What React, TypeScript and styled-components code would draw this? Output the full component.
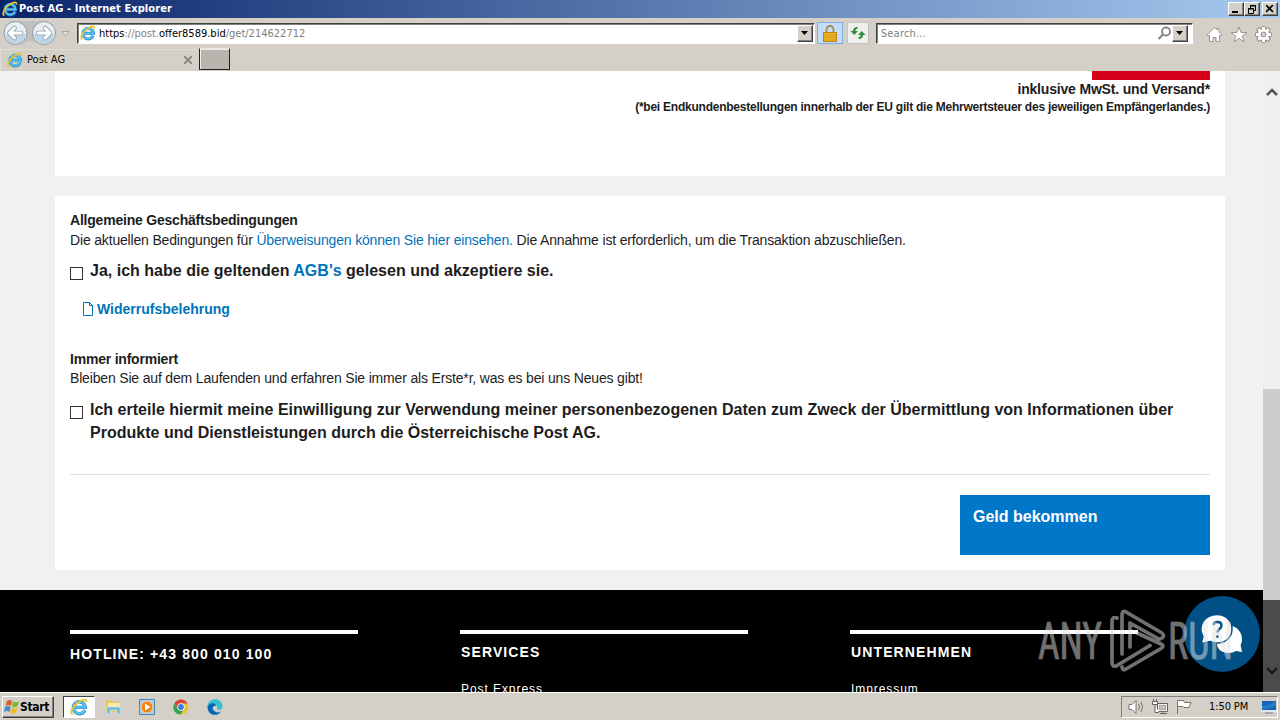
import * as React from "react";
import styled, { createGlobalStyle, css } from "styled-components";

const colors = {
  CHROME: "#d4d0c8",
  CHROME_DARK: "#404040",
  CHROME_SHADOW: "#808080",
  PAGE: "#f1f1f1",
  TEXT: "#1d1d1d",
  LINK: "#0073b9",
  BUTTON: "#0077c8",
  RED: "#d4001a",
};

const fonts = {
  UI: `"DejaVu Sans Condensed", "DejaVu Sans", sans-serif`,
  BODY: `"Liberation Sans", Arial, sans-serif`,
};

const GlobalStyle = createGlobalStyle`
  * {
    box-sizing: border-box;
  }
  body {
    margin: 0;
    overflow: hidden;
  }
`;

const raised = css`
  border: 1px solid;
  border-color: #fff ${colors.CHROME_DARK} ${colors.CHROME_DARK} #fff;
  box-shadow: inset -1px -1px 0 ${colors.CHROME_SHADOW};
`;

const Desktop = styled.div`
  position: relative;
  display: flex;
  flex-direction: column;
  width: 1280px;
  height: 720px;
  overflow: hidden;
  background: ${colors.CHROME};
  font: 11px/14px ${fonts.UI};
  font-stretch: condensed;
  color: #000;
  white-space: nowrap;

  svg {
    display: block;
    flex: none;
  }
`;

const TitleBar = styled.div`
  display: flex;
  align-items: center;
  flex: none;
  height: 18px;
  padding: 0 2px;
  background: linear-gradient(to right, #0a246a, #a6caf0);
`;

const TitleText = styled.span`
  flex: 1;
  margin-left: 1px;
  color: #fff;
  font-weight: 700;
  letter-spacing: 0.08px;
`;

const WindowButton = styled.div<{ $gap?: number }>`
  ${raised}
  display: flex;
  align-items: center;
  justify-content: center;
  width: 16px;
  height: 14px;
  margin-left: ${p => p.$gap || 0}px;
  background: ${colors.CHROME};
`;

const NavBar = styled.div`
  display: flex;
  align-items: center;
  flex: none;
  height: 30px;
  padding: 0 8px 0 2px;
`;

const AddressField = styled.div`
  display: flex;
  align-items: center;
  width: 740px;
  height: 21px;
  margin: 0 2px 0 5px;
  padding: 1px 1px 1px 2px;
  background: #fff;
  border: 1px solid;
  border-color: ${colors.CHROME_DARK} #fff #fff ${colors.CHROME_DARK};
  box-shadow: inset 1px 1px 0 ${colors.CHROME_SHADOW};
`;

const Address = styled.span`
  flex: 1;
  margin-left: 3px;
  padding-top: 2px;
  color: #808080;

  b {
    color: #000;
    font-weight: 400;
  }
`;

const DropButton = styled.div`
  ${raised}
  display: flex;
  align-items: center;
  justify-content: center;
  width: 16px;
  height: 17px;
  background: ${colors.CHROME};
`;

const ToolButton = styled.div<{ $active?: boolean }>`
  display: flex;
  align-items: center;
  justify-content: center;
  width: ${p => (p.$active ? 26 : 22)}px;
  height: 22px;
  margin-right: ${p => (p.$active ? 4 : 7)}px;
  border: 1px solid ${p => (p.$active ? "#7eaee0" : "#c3c3bd")};
  border-radius: ${p => (p.$active ? 0 : 2)}px;
  background: ${p => (p.$active ? "#c5dcf8" : "#eeeeea")};
`;

const SearchField = styled(AddressField)`
  width: 318px;
  margin: 0 13px 0 0;
  padding-right: 4px;
`;

const SearchText = styled(Address)`
  margin-left: 2px;
  letter-spacing: 0.2px;
`;

const NavIcons = styled.div`
  display: flex;
  gap: 7px;
  padding-top: 3px;
`;

const TabBar = styled.div`
  display: flex;
  flex: none;
  height: 23px;
`;

const Tab = styled.div`
  display: flex;
  align-items: center;
  width: 198px;
  height: 22px;
  margin-top: 1px;
  padding: 0 6px 1px 6px;
  border-left: 1px solid #e0ddd6;
  border-top: 1px solid #e0ddd6;

  span {
    flex: 1;
    margin-left: 4px;
  }
`;

const NewTab = styled.div`
  width: 31px;
  height: 22px;
  margin-left: 1px;
  background: #bab4ae;
  border: 1px solid #222;
  border-top-color: #e8e6e1;
  box-shadow: inset 1px 1px 0 #eee;
`;

const Viewport = styled.div`
  display: flex;
  height: 621px;
  overflow: hidden;
`;

const Page = styled.main`
  width: 1263px;
  height: 621px;
  overflow: hidden;
  background: ${colors.PAGE};
  color: ${colors.TEXT};
  font: 14px/20px ${fonts.BODY};
`;

const PriceCard = styled.section`
  display: flex;
  flex-direction: column;
  align-items: flex-end;
  width: 1170px;
  height: 105px;
  margin: 0 0 20px 55px;
  padding-right: 15px;
  background: #fff;
  font-weight: 700;
`;

const PriceBlock = styled.div`
  width: 118px;
  height: 9px;
  background: ${colors.RED};
`;

const TaxLine = styled.div`
  line-height: 19px;
  letter-spacing: -0.18px;
`;

const TaxNote = styled.div`
  font-size: 12px;
  line-height: 16px;
  letter-spacing: -0.237px;
`;

const TermsCard = styled.section`
  width: 1170px;
  height: 374px;
  margin: 0 0 20px 55px;
  padding: 14px 15px 0;
  background: #fff;
`;

const Heading = styled.h4`
  margin: 0;
  font-size: 14px;
  line-height: 20px;
  letter-spacing: -0.21px;
`;

const Copy = styled.p<{ $tight?: boolean }>`
  margin: 0;
  line-height: ${p => (p.$tight ? 18 : 20)}px;
  padding-bottom: ${p => (p.$tight ? 2 : 0)}px;
  letter-spacing: -0.17px;
`;

const Link = styled.a`
  color: ${colors.LINK};
`;

const CheckRow = styled.label`
  display: flex;
  margin-top: 9px;
  font-size: 16px;
  font-weight: 700;
  line-height: 23px;
  letter-spacing: 0.01px;
`;

const Checkbox = styled.span`
  flex: none;
  width: 13px;
  height: 13px;
  margin: 8px 7px 0 0;
  background: #fff;
  border: 1px solid #333;
`;

const Revocation = styled.a`
  display: flex;
  align-items: center;
  gap: 3px;
  height: 20px;
  margin: 17px 0 30px 12px;
  color: ${colors.LINK};
  font-weight: 700;
`;

const Actions = styled.div`
  display: flex;
  justify-content: flex-end;
  margin-top: 30px;
  padding-top: 20px;
  border-top: 1px solid #dedede;
`;

const SubmitButton = styled.button`
  width: 250px;
  height: 60px;
  padding: 11px 13px;
  border: 0;
  background: ${colors.BUTTON};
  color: #fff;
  font: 700 16px/21px ${fonts.BODY};
  text-align: left;
  display: flex;
`;

const Footer = styled.footer`
  display: flex;
  gap: 102px;
  height: 102px;
  padding: 40px 0 0 70px;
  background: #000;
  color: #fff;
`;

const FooterColumn = styled.div<{ $links?: boolean }>`
  flex: none;
  width: 288px;
  padding: ${p => (p.$links ? "8px 0 0 1px" : "10px 0 0")};
  border-top: 4px solid #fff;
`;

const FooterTitle = styled.div`
  font-weight: 700;
  letter-spacing: 1.12px;
`;

const FooterLink = styled.div`
  margin-top: 17px;
  font-size: 12px;
  letter-spacing: 0.93px;
`;

const Scrollbar = styled.div`
  display: flex;
  flex-direction: column;
  width: 17px;
  background: #f0f0f0;
`;

const ScrollArrow = styled.div`
  display: flex;
  align-items: center;
  justify-content: center;
  height: 42px;
`;

const ScrollThumb = styled.div`
  height: 211px;
  margin-top: 276px;
  background: #cdcdcd;
`;

const ScrollEnd = styled.div`
  flex: 1;
  display: flex;
  align-items: flex-end;
  justify-content: center;
  padding-bottom: 17px;
  background: #4b4b4b;
`;

const ChatButton = styled.div`
  position: absolute;
  left: 1184px;
  top: 596px;
`;

const Watermark = styled.div`
  position: absolute;
  left: 1038px;
  top: 608px;
  opacity: 0.5;
`;

const TaskBar = styled.div`
  display: flex;
  align-items: center;
  flex: none;
  height: 28px;
  padding: 1px 2px 0;
  border-top: 1px solid #fff;
  background: ${colors.CHROME};
`;

const StartButton = styled.div`
  ${raised}
  display: flex;
  align-items: center;
  width: 52px;
  height: 22px;
  padding-left: 1px;
  font-size: 12px;
  font-weight: 700;
  letter-spacing: -0.3px;
`;

const ActiveTask = styled.div`
  display: flex;
  align-items: center;
  justify-content: center;
  width: 32px;
  height: 22px;
  margin-left: 9px;
  background: #fff;
  border: 1px solid;
  border-color: ${colors.CHROME_DARK} #fff #fff ${colors.CHROME_DARK};
`;

const QuickLaunch = styled.div`
  display: flex;
  flex: 1;
  gap: 18px;
  margin-left: 10px;
`;

const Tray = styled.div`
  display: flex;
  align-items: center;
  width: 157px;
  height: 22px;
  padding-left: 6px;
  border: 1px solid;
  border-color: ${colors.CHROME_SHADOW} #fff #fff ${colors.CHROME_SHADOW};
`;

const TrayIcons = styled.div`
  display: flex;
  gap: 7px;
`;

const Clock = styled.span`
  flex: 1;
  margin-left: 16px;
  letter-spacing: -0.1px;
`;

const IeIcon = ({ size = 16 }: { size?: number }) => (
  <svg width={size} height={size} viewBox="0 0 16 16" fill="none">
    <path d="M13.2 10.7A5.3 5.3 0 1 1 13.6 8.3H4.5" stroke="#2588c6" strokeWidth="3" />
    <path d="M13 10.6A5.2 5.2 0 1 1 13.5 8.4H4.5" stroke="#55c2f2" strokeWidth="2" />
    <path d="M2.4 14.6C-1 13 3 6.5 8 3.4c3.8-2.5 7-2.8 6.5.2" stroke="#edc22b" strokeWidth="1.7" />
  </svg>
);

const ArrowButtons = () => (
  <svg width="70" height="28" viewBox="0 0 70 28" fill="none">
    <path d="M13 2h29c14 0 14 24 0 24-7 0-8-4-14-4s-7 4-15 4C-1 26-1 2 13 2z" fill="#c3c1be" />
    {[13.5, 42].map(x => (
      <g key={x}>
        <circle cx={x} cy="14" r="11.5" fill="#eaeff3" stroke="#8a98a6" />
        <path d={`M${x - 10} 15a10 10 0 0 0 20 0q-10-5-20 0z`} fill="#c0d6e6" />
      </g>
    ))}
    <g strokeLinejoin="round" strokeLinecap="round">
      <path d="M19 14H8m4.500-5L7.500 14l5 5" stroke="#8fa4b5" strokeWidth="4.600" />
      <path d="M19 14H8m4.500-5L7.500 14l5 5" stroke="#fff" strokeWidth="3" />
      <path d="M36 14h11.500m-4.500-5 5 5-5 5" stroke="#8fa4b5" strokeWidth="4.600" />
      <path d="M36 14h11.500m-4.500-5 5 5-5 5" stroke="#fff" strokeWidth="3" />
    </g>
    <path d="M60 12.500h7l-3.500 4.500z" fill="#e8e6e2" stroke="#aaa69f" />
  </svg>
);

const DownTriangle = () => (
  <svg width="8" height="4" viewBox="0 0 8 4">
    <path d="M0 0h7L3.500 4z" />
  </svg>
);

const LockIcon = () => (
  <svg width="14" height="17" viewBox="0 0 14 17" fill="none">
    <path d="M3.500 8V4.500a3.500 3.500 0 0 1 7 0V8" stroke="#a58c48" strokeWidth="1.800" />
    <rect x=".5" y="7.500" width="13" height="9" fill="#eeb322" stroke="#ba8420" />
    <path d="M1 10h12M1 12.500h12M1 15h12" stroke="#d99a1c" />
  </svg>
);

const RefreshIcon = () => (
  <svg width="16" height="14" viewBox="0 0 16 14" fill="#2d9138">
    <path d="M7.500 1C4.500 1 3 2.500 3 5H.5L4.300 9 8 5H5.500C5.500 3.500 6 3 7.500 3z" />
    <path d="M8.500 13c3 0 4.500-1.500 4.500-4h2.500l-3.800-4L8 9h2.500c0 1.500-.5 2-2 2z" />
  </svg>
);

const SearchIcon = () => (
  <svg width="15" height="15" viewBox="0 0 15 15" fill="none" stroke="#858585">
    <circle cx="9" cy="5.500" r="4" strokeWidth="1.800" />
    <path d="M6 8.500 1.500 13" strokeWidth="2.300" />
  </svg>
);

const HomeIcon = () => (
  <svg width="17" height="17" viewBox="0 0 17 17" fill="#fff" stroke="#9b9893">
    <path d="M8.500 1.500 1 9l1.500 1L3.500 9v6.500h3.500v-4h3v4h3.500V9l1 1L16 9l-3-3V2.500h-2V4z" />
  </svg>
);

const StarIcon = () => (
  <svg width="18" height="17" viewBox="0 0 18 17" fill="#fff" stroke="#9b9893">
    <path d="m9 1 2 5.500h6l-4.800 3.600 1.800 5.700L9 12.400l-5 3.400 1.800-5.700L1 6.500h6z" />
  </svg>
);

const GearIcon = () => (
  <svg width="17" height="17" viewBox="0 0 17 17" fill="none">
    {[0, 45, 90, 135].map(angle => (
      <rect key={angle} x="6.500" y=".5" width="4" height="16" rx="1" fill="#fff" stroke="#8b8883" transform={`rotate(${angle} 8.500 8.500)`} />
    ))}
    <circle cx="8.500" cy="8.500" r="5.500" fill="#fff" />
    <circle cx="8.500" cy="8.500" r="2.500" fill="#d4d0c8" stroke="#8b8883" />
  </svg>
);

const FileIcon = () => (
  <svg width="12" height="14" viewBox="0 0 12 14" fill="none" stroke={colors.LINK}>
    <path d="M1.500.500h6l3 3v10h-9zM7.500.500v3h3" />
  </svg>
);

const ScrollChevron = ({ down }: { down?: boolean }) => (
  <svg width="12" height="8" viewBox="0 0 12 8" fill="none" stroke={down ? "#1c1c1c" : "#555"} strokeWidth="2.500">
    <path d={down ? "M1 1l5 5 5-5" : "M1 7l5-5 5 5"} />
  </svg>
);

const ChatIcon = () => (
  <svg width="76" height="76" viewBox="0 0 76 76">
    <circle cx="38" cy="38" r="38" fill="#005086" />
    <path d="M45 57c-7 0-12-4-12-9l14-18c7 1 11 7 11 13 0 4-2 6-1 8l1 5-6-1q-3 2-7 2z" fill="#fff" />
    <path d="M33 18.500c9 0 15 6.500 15 14.500s-6 14-15 14c-3 0-5-.5-7-1.500l-9 2 2-7c-6-11 2-22 14-22z" fill="#fff" stroke="#005086" strokeWidth="1.500" />
    <path d="M29.500 29c.5-4 8-4 8 .5 0 3.500-4 3.500-4 7" fill="none" stroke="#005086" strokeWidth="2.400" />
    <circle cx="33.500" cy="40.500" r="1.500" fill="#005086" />
  </svg>
);

const AnyRunLogo = () => (
  <svg width="206" height="66" viewBox="0 0 206 66" fill="none">
    <g fill="#e2e2e2" stroke="#e2e2e2" strokeWidth=".7" fontFamily="Roboto" fontSize="52" fontWeight="400">
      <text x="0" y="51" textLength="64" lengthAdjust="spacingAndGlyphs">ANY</text>
      <text x="130" y="51" textLength="65" lengthAdjust="spacingAndGlyphs">RUN</text>
    </g>
    <path
      d="M79 10q-5-2-5 4v40q0 6 5 3.500l33-20M84 46V7q0-5 4-3l36 21q3 3 0 5t-5 0L92 15v24M99 25l24 11q4 2 0 4.500L88 61q-3 2-4-2"
      stroke="#e2e2e2"
      strokeWidth="3.700"
      strokeLinejoin="round"
      strokeLinecap="round"
    />
  </svg>
);

const WindowsFlag = () => (
  <svg width="16" height="16" viewBox="0 0 16 16">
    <path d="M3 2q3-2 5 0L7 7Q5 5 1.500 7z" fill="#e35b28" />
    <path d="M9 2.500q3 1.500 6 0L13.500 7Q10.500 9 8 7.500z" fill="#7db633" />
    <path d="M1 8q3-2 5.500 0L5.500 13Q3 11 0 13z" fill="#3e8ed2" />
    <path d="M7.500 8.500q3 2 6 0L12 13.500q-3 2-6 0z" fill="#efbd28" />
  </svg>
);

const FolderIcon = () => (
  <svg width="16" height="16" viewBox="0 0 16 16">
    <path d="M1 3V1h6l1 2h6v10H1z" fill="#e6c967" />
    <path d="M3 4h12v5H3z" fill="#f9eaa9" />
    <path d="M2 8h13v7h-3v-4H5v4H2z" fill="#69b7dc" stroke="#d7edf6" strokeWidth=".6" />
  </svg>
);

const PlayerIcon = () => (
  <svg width="16" height="16" viewBox="0 0 16 16">
    <path d="M.5.500h15v15H.5z" fill="#a9cceb" stroke="#4288bd" />
    <circle cx="8" cy="8" r="6" fill="#ef8518" stroke="#ffd39a" />
    <path d="m6 4.500 5.500 3.500L6 11.500z" fill="#fff" />
  </svg>
);

const ChromeIcon = () => (
  <svg width="16" height="16" viewBox="0 0 16 16">
    <circle cx="8" cy="8" r="7.500" fill="#eac137" />
    <path d="M1.500 4.300A7.500 7.500 0 0 1 14.600 4.500H8L4.800 9.500z" fill="#dc4338" />
    <path d="M1.500 4.300 5 10l3 1.500h2L7.500 15.500C1 15-1.500 8.500 1.500 4.300z" fill="#34a350" />
    <circle cx="8" cy="8" r="3.700" fill="#fff" />
    <circle cx="8" cy="8" r="2.900" fill="#337cdb" />
  </svg>
);

const EdgeIcon = () => (
  <svg width="16" height="16" viewBox="0 0 16 16">
    <path d="M.5 7C1-2 15-2 15.500 7c.3 4-4 4.500-6 3 3-5-5-7-9-3z" fill="#36bfd1" />
    <path d="M.5 7c4-4 8-3 9 0-3-1-5 2-3 4 2 3 6 3 8 1C10 19 0 16 .5 7z" fill="#0867b5" />
  </svg>
);

const SpeakerIcon = () => (
  <svg width="17" height="16" viewBox="0 0 17 16" fill="none" stroke="#77736e">
    <path d="M1 5.500h3l4-4v13l-4-4H1z" fill="#fff" />
    <path d="M10.500 5q2 3 0 6M13 3q3 5 0 10" />
  </svg>
);

const NetworkIcon = () => (
  <svg width="17" height="16" viewBox="0 0 17 16" fill="none" stroke="#66635e">
    <path d="M5.500 4.500h10v8h-10zM8 14.500h7M11 13v2" fill="#eee" />
    <path d="M7.500 6.500h6v4h-6z" fill="#c5c2bc" stroke="#aaa69f" />
    <path d="M.5 2.500v3h5v-3zM1.500 0v2M4.500 0v2M3 6v7.500h4" fill="#fff" />
  </svg>
);

const FlagIcon = () => (
  <svg width="17" height="16" viewBox="0 0 17 16" fill="#fff" stroke="#77736e">
    <path d="M1.500 15V1.500h6l1 2h6.500l-2 5H8l-1-1H2" />
  </svg>
);

const MonitorIcon = () => (
  <svg width="16" height="14" viewBox="0 0 16 14">
    <path d="M1 1h14v9H1z" fill="#1764b4" />
    <path d="M1 6q7 0 14-5v4q-7 4-14 4z" fill="#287fca" />
    <path d="M0 10h16v2H0z" fill="#d8e8f5" />
    <path d="M4 13h8" stroke="#68809a" />
  </svg>
);

const BrowserChrome = () => (
  <>
    <TitleBar>
      <IeIcon />
      <TitleText>Post AG - Internet Explorer</TitleText>
      <WindowButton>
        <svg width="8" height="8"><path d="M0 6h6v2H0z" /></svg>
      </WindowButton>
      <WindowButton>
        <svg width="9" height="9" fill="none" stroke="#000">
          <path d="M2.500 3V.5h5v5H5.500M2 1h6M.5 3.500h5v5h-5zM0 4h6" />
        </svg>
      </WindowButton>
      <WindowButton $gap={2}>
        <svg width="8" height="8" stroke="#000" strokeWidth="1.700"><path d="m0 0 7 7M7 0 0 7" /></svg>
      </WindowButton>
    </TitleBar>
    <NavBar>
      <ArrowButtons />
      <AddressField>
        <IeIcon />
        <Address><b>https</b>://post.<b>offer8589.bid</b>/get/214622712</Address>
        <DropButton><DownTriangle /></DropButton>
      </AddressField>
      <ToolButton $active><LockIcon /></ToolButton>
      <ToolButton><RefreshIcon /></ToolButton>
      <SearchField>
        <SearchText>Search...</SearchText>
        <SearchIcon />
        <DropButton><DownTriangle /></DropButton>
      </SearchField>
      <NavIcons>
        <HomeIcon />
        <StarIcon />
        <GearIcon />
      </NavIcons>
    </NavBar>
    <TabBar>
      <Tab>
        <IeIcon />
        <span>Post AG</span>
        <svg width="8" height="8" stroke="#85817b" strokeWidth="1.800"><path d="m0 0 8 8M8 0 0 8" /></svg>
      </Tab>
      <NewTab />
    </TabBar>
  </>
);

const PageContent = () => (
  <Page>
    <PriceCard>
      <PriceBlock />
      <TaxLine>inklusive MwSt. und Versand*</TaxLine>
      <TaxNote>(*bei Endkundenbestellungen innerhalb der EU gilt die Mehrwertsteuer des jeweiligen Empfängerlandes.)</TaxNote>
    </PriceCard>
    <TermsCard>
      <Heading>Allgemeine Geschäftsbedingungen</Heading>
      <Copy>
        Die aktuellen Bedingungen für <Link>Überweisungen können Sie hier einsehen.</Link> Die Annahme ist erforderlich, um die Transaktion abzuschließen.
      </Copy>
      <CheckRow>
        <Checkbox />
        <span>Ja, ich habe die geltenden <Link>AGB's</Link> gelesen und akzeptiere sie.</span>
      </CheckRow>
      <Revocation>
        <FileIcon />
        Widerrufsbelehrung
      </Revocation>
      <Heading>Immer informiert</Heading>
      <Copy $tight>Bleiben Sie auf dem Laufenden und erfahren Sie immer als Erste*r, was es bei uns Neues gibt!</Copy>
      <CheckRow>
        <Checkbox />
        <span>
          Ich erteile hiermit meine Einwilligung zur Verwendung meiner personenbezogenen Daten zum Zweck der Übermittlung von Informationen über
          <br />
          Produkte und Dienstleistungen durch die Österreichische Post AG.
        </span>
      </CheckRow>
      <Actions>
        <SubmitButton>Geld bekommen</SubmitButton>
      </Actions>
    </TermsCard>
    <Footer>
      <FooterColumn>
        <FooterTitle>HOTLINE: +43 800 010 100</FooterTitle>
      </FooterColumn>
      <FooterColumn $links>
        <FooterTitle>SERVICES</FooterTitle>
        <FooterLink>Post Express</FooterLink>
      </FooterColumn>
      <FooterColumn $links>
        <FooterTitle>UNTERNEHMEN</FooterTitle>
        <FooterLink>Impressum</FooterLink>
      </FooterColumn>
    </Footer>
  </Page>
);

const App: React.FC = () => (
  <Desktop>
    <GlobalStyle />
    <BrowserChrome />
    <Viewport>
      <PageContent />
      <Scrollbar>
        <ScrollArrow><ScrollChevron /></ScrollArrow>
        <ScrollThumb />
        <ScrollEnd><ScrollChevron down /></ScrollEnd>
      </Scrollbar>
    </Viewport>
    <TaskBar>
      <StartButton><WindowsFlag />Start</StartButton>
      <ActiveTask><IeIcon size={18} /></ActiveTask>
      <QuickLaunch>
        <FolderIcon />
        <PlayerIcon />
        <ChromeIcon />
        <EdgeIcon />
      </QuickLaunch>
      <Tray>
        <TrayIcons>
          <SpeakerIcon />
          <NetworkIcon />
          <FlagIcon />
        </TrayIcons>
        <Clock>1:50 PM</Clock>
        <MonitorIcon />
      </Tray>
    </TaskBar>
    <ChatButton><ChatIcon /></ChatButton>
    <Watermark><AnyRunLogo /></Watermark>
  </Desktop>
);

export default App;
